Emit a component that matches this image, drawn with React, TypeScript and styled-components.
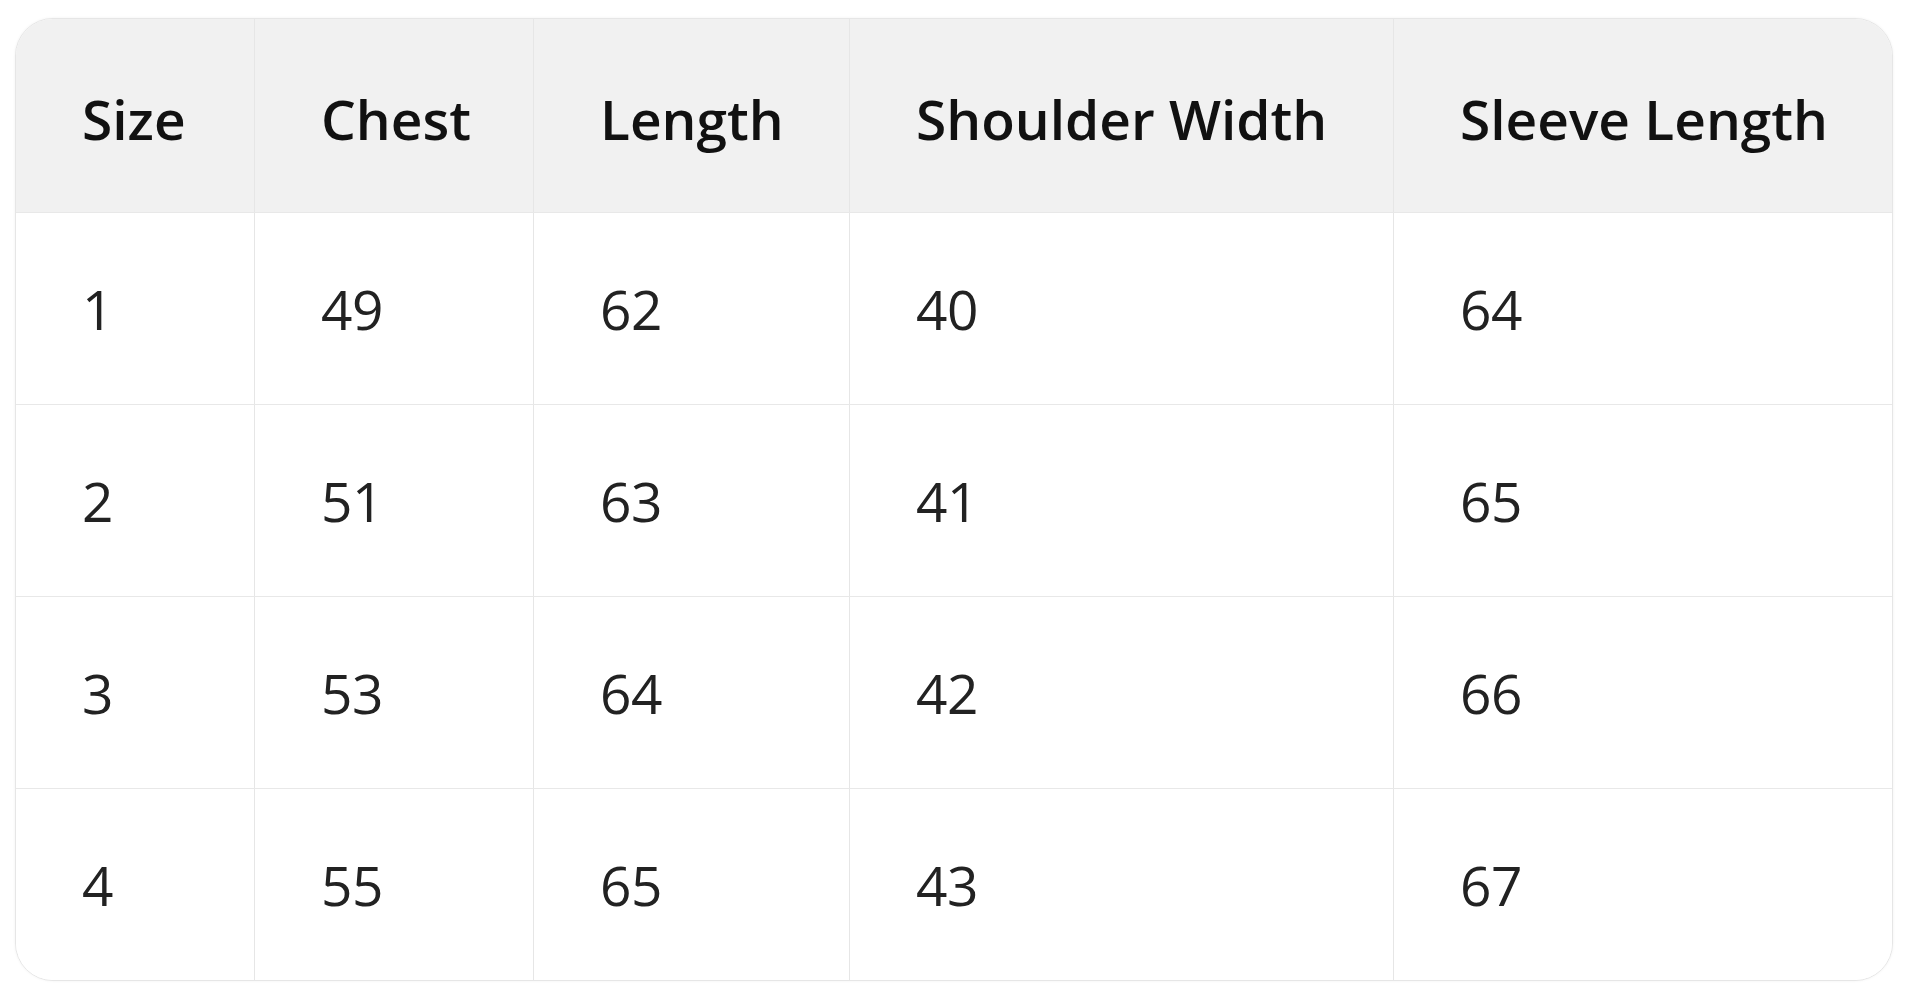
import React from 'react';
import styled, { createGlobalStyle } from 'styled-components';

const GlobalStyle = createGlobalStyle`
  html, body {
    margin: 0;
    padding: 0;
    background: #ffffff;
  }
  body {
    font-family: "Open Sans", "Noto Sans", "Liberation Sans", sans-serif;
  }
`;

const columns = ['Size', 'Chest', 'Length', 'Shoulder Width', 'Sleeve Length'];

const rows = [
  ['1', '49', '62', '40', '64'],
  ['2', '51', '63', '41', '65'],
  ['3', '53', '64', '42', '66'],
  ['4', '55', '65', '43', '67'],
];

const Page = styled.div`
  padding: 18px 20px 24px 15px;
`;

const Card = styled.div`
  box-sizing: border-box;
  width: 1878px;
  border: 1px solid #e6e6e6;
  border-radius: 38px;
  overflow: hidden;
  background: #ffffff;
  box-shadow: 0 0 3px rgba(0, 0, 0, 0.06);
`;

const Row = styled.div<{ $header?: boolean }>`
  display: grid;
  grid-template-columns: 238px 279px 316px 544px 1fr;
  height: ${p => (p.$header ? 193 : 191)}px;
  background: ${p => (p.$header ? '#f1f1f1' : '#ffffff')};
  border-top: ${p => (p.$header ? 'none' : '1px solid #e8e8e8')};
`;

const Cell = styled.div<{ $header?: boolean }>`
  display: flex;
  align-items: center;
  padding-left: 66px;
  padding-top: ${p => (p.$header ? 6 : 0)}px;
  font-size: 55px;
  font-weight: ${p => (p.$header ? 600 : 400)};
  color: ${p => (p.$header ? '#111111' : '#222222')};
  letter-spacing: ${p => (p.$header ? '0' : '-0.5px')};
  border-left: 1px solid #e6e6e6;
  &:first-child {
    border-left: none;
  }
`;

export default function App() {
  return (
    <>
      <GlobalStyle />
      <Page>
        <Card>
          <Row $header>
            {columns.map(c => (
              <Cell key={c} $header>
                {c}
              </Cell>
            ))}
          </Row>
          {rows.map(r => (
            <Row key={r[0]}>
              {r.map((v, i) => (
                <Cell key={i}>{v}</Cell>
              ))}
            </Row>
          ))}
        </Card>
      </Page>
    </>
  );
}
